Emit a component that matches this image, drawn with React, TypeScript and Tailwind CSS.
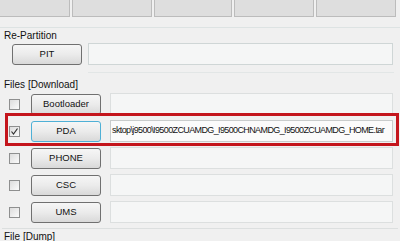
import React from "react";

const font = { fontFamily: '"Liberation Sans", Arial, sans-serif' };

function Check({ checked }: { checked?: boolean }) {
  return (
    <div className="w-[11px] h-[11px] border border-[#8e8f8f] bg-gradient-to-br from-[#dcdcdc] to-[#fbfbfb] flex items-center justify-center">
      {checked && (
        <svg width="9" height="9" viewBox="0 0 9 9">
          <path d="M1.5 4.5 L3.5 7 L7.5 1.5" fill="none" stroke="#333" strokeWidth="1.2" />
        </svg>
      )}
    </div>
  );
}

function Btn({ label, focus }: { label: string; focus?: boolean }) {
  return (
    <div
      className={
        "w-[70px] h-[21px] rounded-[3px] border bg-gradient-to-b from-[#f6f6f6] via-[#ebebeb] to-[#d9d9d9] flex items-center justify-center text-[9.5px] text-[#111] " +
        (focus ? "border-[#4fb0d6]" : "border-[#707070]")
      }
    >
      {label}
    </div>
  );
}

function Row({ label, checked, text }: { label: string; checked?: boolean; text?: string }) {
  return (
    <div className="flex items-center h-[22px]">
      <div className="w-[31px] pl-[9px] flex items-center">
        <Check checked={checked} />
      </div>
      <Btn label={label} focus={checked} />
      <div
        className={
          "ml-[9px] w-[283px] h-[22px] border overflow-hidden whitespace-nowrap flex items-center text-[9px] tracking-[-0.62px] text-[#111] " +
          (text ? "bg-[#fbfbfb] border-[#c9cccc]" : "bg-[#f5f6f6] border-[#dcdfdf]")
        }
      >
        {text && <span className="ml-[1px]">{text}</span>}
      </div>
    </div>
  );
}

export default function App() {
  return (
    <div className="w-[400px] h-[241px] bg-[#f0f0f0] overflow-hidden relative text-[#111]" style={font}>
      <div className="flex gap-[2px] h-[17px]">
        <div className="w-[70px] bg-[#dedede] border-b border-r border-[#bcbcbc]" />
        <div className="w-[80px] bg-[#dedede] border-b border-x border-[#bcbcbc]" />
        <div className="w-[78px] bg-[#dedede] border-b border-x border-[#bcbcbc]" />
        <div className="w-[80px] bg-[#dedede] border-b border-x border-[#bcbcbc]" />
        <div className="w-[80px] bg-[#dedede] border-b border-x border-[#bcbcbc]" />
      </div>
      <div className="mt-[10px] h-px bg-[#dde3e3]" />
      <div className="pl-[4px] h-[15px] leading-[15px] text-[10px]">Re-Partition</div>
      <div className="flex items-center h-[22px] pl-[12px]">
        <Btn label="PIT" />
        <div className="ml-[6px] w-[305px] h-[22px] bg-[#f5f6f6] border border-[#cfd6d6]" />
      </div>
      <div className="mt-[7px] h-px bg-[#e2e6e6] ml-[88px] mr-[6px]" />
      <div className="pl-[4px] mt-[5px] h-[15px] leading-[13px] text-[10px]">Files [Download]</div>
      <div className="flex flex-col gap-[5px]">
        <Row label="Bootloader" />
        <Row label="PDA" checked text="sktop\j9500\I9500ZCUAMDG_I9500CHNAMDG_I9500ZCUAMDG_HOME.tar" />
        <Row label="PHONE" />
        <Row label="CSC" />
        <Row label="UMS" />
      </div>
      <div className="mt-[5px] h-px bg-[#dcdfdf] mx-[2px]" />
      <div className="pl-[4px] mt-[2px] leading-[12px] text-[10px]">File [Dump]</div>
      <div className="absolute left-[5px] top-[113px] w-[394px] h-[33px] border-[3px] border-[#c4151c]" />
    </div>
  );
}
